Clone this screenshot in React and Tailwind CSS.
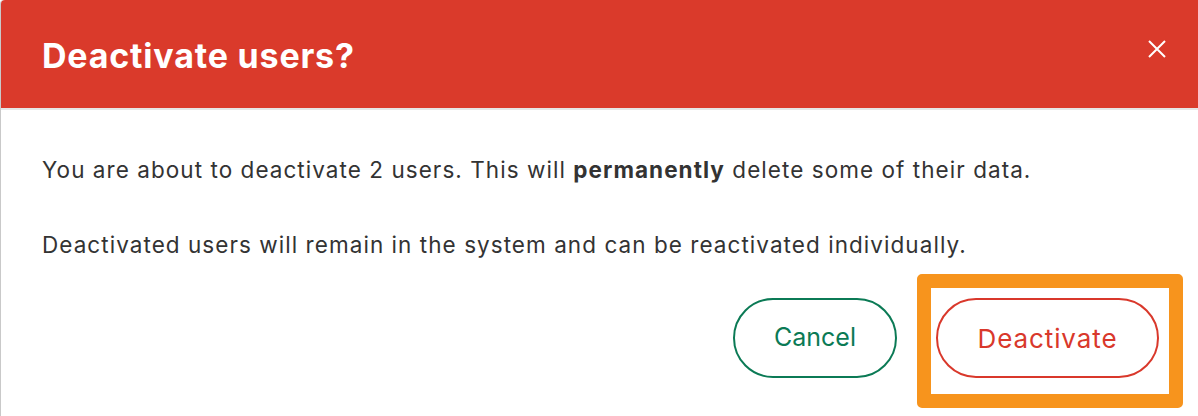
import React from 'react'

const CloseIcon = () => (
  <svg width="20" height="20" viewBox="0 0 20 20" fill="none" stroke="currentColor" strokeWidth="2">
    <path d="M2 2 L18 18 M18 2 L2 18" />
  </svg>
)

const App = () => {
  return (
    <div className="w-[1198px] h-[416px] bg-white overflow-hidden" style={{fontFamily: 'Inter, "Noto Sans", sans-serif'}}>
      <div className="h-full border-l border-[#c9c9c9] rounded-tl-[4px] flex flex-col">
        <div className="h-[110px] shrink-0 border-b-2 border-[#e6e6e6]">
          <div className="h-full bg-[#da3a2b] rounded-tl-[4px] flex items-center justify-between pl-[41px] pr-[31px]">
            <h1 className="text-white font-bold text-[34px] tracking-[0.8px] mt-[2px]">Deactivate users?</h1>
            <button className="text-white mb-[10px]">
              <CloseIcon />
            </button>
          </div>
        </div>

        <div className="pl-[41px] pt-[47px] text-[#333333] text-[22.5px] tracking-[1.05px]">
          <p className="leading-[26px]">You are about to deactivate 2 users. This will <strong className="font-bold">permanently</strong> delete some of their data.</p>
          <p className="leading-[26px] mt-[49px]">Deactivated users will remain in the system and can be reactivated individually.</p>
        </div>

        <div className="flex justify-end items-start pr-[15px] mt-[16px]">
          <button className="mt-[24px] w-[164px] h-[80px] rounded-full border-2 border-[#0b7a55] text-[#0b7a55] text-[25px]">
            Cancel
          </button>
          <div className="ml-[20px] border-[14px] border-[#f7941d] rounded-[5px] pl-[5px] pr-[10px] pt-[10px] pb-[16px]">
            <button className="w-[223px] h-[80px] rounded-full border-2 border-[#d9382b] text-[#d9382b] text-[26px] tracking-[0.9px]">
              Deactivate
            </button>
          </div>
        </div>
      </div>
    </div>
  )
}

export default App
